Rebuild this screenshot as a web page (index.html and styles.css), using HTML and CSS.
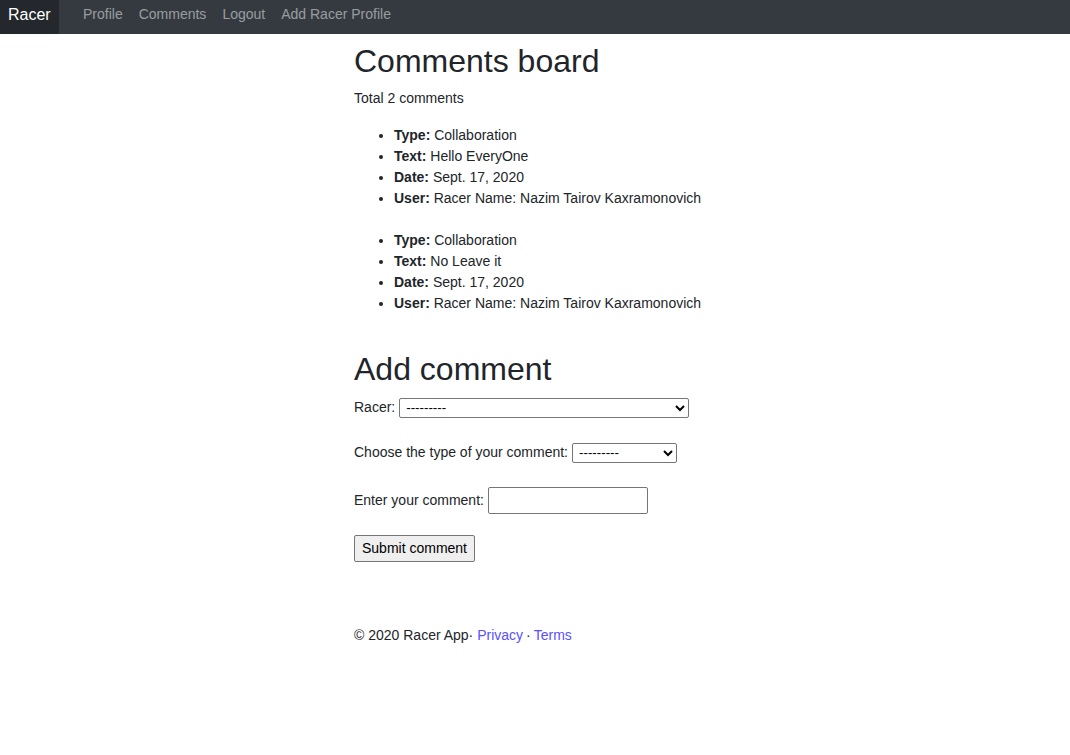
FILE: index.html
```html
<!DOCTYPE html>
<html lang="en">
<head>
<meta charset="utf-8">
<title>Comments board</title>
<link rel="stylesheet" href="styles.css">
</head>
<body>
<nav class="navbar">
  <a class="brand" href="#">Racer</a>
  <div class="nav-links">
    <a href="#">Profile</a>
    <a href="#">Comments</a>
    <a href="#">Logout</a>
    <a href="#">Add Racer Profile</a>
  </div>
</nav>
<main class="container">
  <h1 class="title">Comments board</h1>
  <p class="total">Total 2 comments</p>
  <ul class="comment">
    <li><b>Type:</b> Collaboration</li>
    <li><b>Text:</b> Hello EveryOne</li>
    <li><b>Date:</b> Sept. 17, 2020</li>
    <li><b>User:</b> Racer Name: Nazim Tairov Kaxramonovich</li>
  </ul>
  <ul class="comment">
    <li><b>Type:</b> Collaboration</li>
    <li><b>Text:</b> No Leave it</li>
    <li><b>Date:</b> Sept. 17, 2020</li>
    <li><b>User:</b> Racer Name: Nazim Tairov Kaxramonovich</li>
  </ul>
  <h2 class="title add">Add comment</h2>
  <form class="form">
    <div class="field">
      <label for="racer">Racer:</label>
      <select id="racer" class="sel-racer"><option>---------</option></select>
    </div>
    <div class="field">
      <label for="type">Choose the type of your comment:</label>
      <select id="type" class="sel-type"><option>---------</option></select>
    </div>
    <div class="field field-tall">
      <label for="text">Enter your comment:</label>
      <input id="text" type="text" class="txt">
    </div>
    <button type="button" class="btn">Submit comment</button>
  </form>
  <footer class="footer">© 2020 Racer App· <a href="#">Privacy</a><span class="sep">·</span><a href="#">Terms</a></footer>
</main>
</body>
</html>
```
FILE: styles.css
```css
html, body {
  margin: 0;
  padding: 0;
}
body {
  font-family: "Liberation Sans", Arial, sans-serif;
  font-size: 14px;
  line-height: 21px;
  color: #212529;
  background: #fff;
}
.navbar {
  display: flex;
  align-items: stretch;
  height: 34px;
  background: #343a40;
}
.brand {
  display: block;
  padding: 4px 8px 0;
  line-height: 21px;
  background: #24272b;
  color: #fff;
  font-size: 16px;
  text-decoration: none;
  width: 43px;
}
.nav-links {
  display: flex;
  align-items: flex-start;
  padding-top: 4px;
  margin-left: 16px;
}
.nav-links a {
  color: rgba(255, 255, 255, 0.5);
  text-decoration: none;
  padding: 0 8px;
  font-size: 14px;
  line-height: 21px;
}
.container {
  width: 362px;
  margin: 0 auto;
}
.title {
  font-size: 32px;
  font-weight: 500;
  line-height: 1.2;
  margin: 8px 0 8px;
}
.title.add {
  margin-top: 36px;
  margin-bottom: 8px;
}
.total {
  margin: 0 0 16px;
}
.comment {
  margin: 0 0 21px;
  padding-left: 40px;
}
b {
  font-weight: 700;
}
.form {
  margin: 0;
}
.field {
  display: flex;
  align-items: center;
  gap: 4px;
  height: 22px;
  margin-bottom: 23px;
  white-space: nowrap;
}
.field-tall {
  height: 28px;
  margin-bottom: 20px;
}
select {
  font-family: "Liberation Sans", Arial, sans-serif;
  font-size: 13.33px;
  height: 20px;
  color: #000;
  background: #fff;
  border: 1px solid #767676;
  border-radius: 2px;
  padding: 0 0 0 2px;
}
.sel-racer {
  width: 290px;
}
.sel-type {
  width: 105px;
}
.txt {
  width: 160px;
  height: 27px;
  box-sizing: border-box;
  border: 1px solid #767676;
  border-radius: 2px;
  padding: 1px 2px;
  font-family: "Liberation Sans", Arial, sans-serif;
  font-size: 13.33px;
}
.btn {
  display: block;
  width: 121px;
  height: 27px;
  box-sizing: border-box;
  padding: 0;
  white-space: nowrap;
  background: #efefef;
  border: 1px solid #767676;
  border-radius: 2px;
  color: #000;
  font-family: "Liberation Sans", Arial, sans-serif;
  font-size: 14px;
}
.footer {
  margin-top: 63px;
  white-space: nowrap;
}
.footer a {
  color: #5a50ff;
  text-decoration: none;
}
.footer .sep {
  margin: 0 3px;
  margin-left: 3px;
}
```
